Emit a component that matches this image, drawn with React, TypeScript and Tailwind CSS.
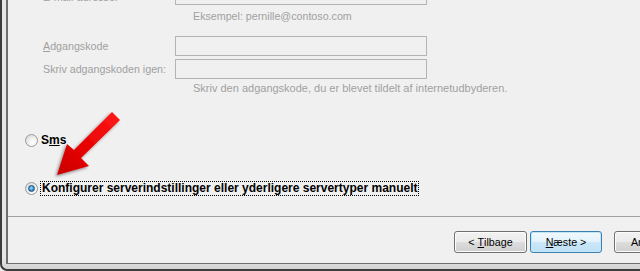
import React from "react";

// ─── Small primitives ─────────────────────────────────────────────────────────

const grayText = "text-[10.7px] text-[#a0a0a0]";

function TextBox() {
  return <div className="w-[252px] h-[20px] border border-[#b4b4b4] bg-[#f0f0f0]" />;
}

function FieldRow({ label, accessKey }: { label: string; accessKey?: boolean }) {
  return (
    <div className="flex items-center h-[20px]">
      <span className={`w-[132px] ${grayText} leading-[20px]`}>
        {accessKey ? (
          <>
            <span className="underline underline-offset-[1px]">{label[0]}</span>
            {label.slice(1)}
          </>
        ) : (
          label
        )}
      </span>
      <TextBox />
    </div>
  );
}

function Radio({ checked }: { checked?: boolean }) {
  return (
    <span className="w-[13px] h-[13px] rounded-full border border-[#9c9c9c] bg-[radial-gradient(circle_at_65%_70%,#ffffff_0%,#f4f4f4_35%,#cfcfcf_100%)] flex items-center justify-center shrink-0">
      {checked && (
        <span className="w-[7px] h-[7px] rounded-full border border-[#1d4f7c] bg-[radial-gradient(circle_at_45%_40%,#9edcfc_0%,#3c93cf_55%,#17538b_100%)]" />
      )}
    </span>
  );
}

function WinButton({
  children,
  primary,
}: {
  children: React.ReactNode;
  primary?: boolean;
}) {
  return (
    <div
      className={
        primary
          ? "w-[72px] h-[22px] shrink-0 rounded-[3px] border border-[#3c7fb1] bg-[linear-gradient(#f1f9fe_0%,#e3f2fb_48%,#cbe7f8_52%,#bfe0f5_100%)] shadow-[inset_0_0_0_1px_#c4e5f6] flex items-center justify-center text-[10.7px] text-black"
          : "w-[73px] h-[22px] shrink-0 rounded-[3px] border border-[#707070] bg-[linear-gradient(#f2f2f2_0%,#ebebeb_48%,#dddddd_52%,#cfcfcf_100%)] shadow-[inset_0_0_0_1px_#fcfcfc] flex items-center justify-center text-[10.7px] text-black"
      }
    >
      {children}
    </div>
  );
}

// ─── Arrow overlay ────────────────────────────────────────────────────────────

function RedArrow() {
  return (
    <svg
      className="absolute left-0 top-0 pointer-events-none"
      width="640"
      height="271"
      viewBox="0 0 640 271"
    >
      <defs>
        <linearGradient id="arrowFill" x1="1" y1="0" x2="0" y2="1">
          <stop offset="0" stopColor="#ff1a1a" />
          <stop offset="0.6" stopColor="#e60000" />
          <stop offset="1" stopColor="#c80000" />
        </linearGradient>
        <filter id="arrowShadow" x="-20%" y="-20%" width="140%" height="140%">
          <feGaussianBlur in="SourceGraphic" stdDeviation="0.5" result="soft" />
          <feDropShadow in="soft" dx="-1.5" dy="1.5" stdDeviation="1.5" floodColor="#000" floodOpacity="0.45" />
        </filter>
      </defs>
      <polygon
        points="112,112 120,120 81,158 89,166 57,175 67,144 74,150"
        fill="url(#arrowFill)"
        filter="url(#arrowShadow)"
      />
    </svg>
  );
}

// ─── Main ─────────────────────────────────────────────────────────────────────

export default function App() {
  return (
    <div className="relative w-[640px] h-[271px] overflow-hidden bg-[#f0f0f0] font-['Liberation_Sans',Arial,sans-serif]">
      {/* outer window frame */}
      <div className="h-[271px] border-l-2 border-b-2 border-[#3c3c3c] rounded-bl-[7px] bg-[linear-gradient(#e6e6e6_0%,#e6e6e6_96%,#d2d2d2_100%)] pl-[4px] pb-[5px]">
        {/* inner dialog panel */}
        <div className="h-[264px] border-l-2 border-b border-[#6e6e6e] bg-[#f0f0f0] flex flex-col">
          {/* form content */}
          <div className="h-[216px] overflow-hidden pl-[35px]">
            {/* E-mail row, cut off at top */}
            <div className="flex items-center h-[20px] mt-[-15px]">
              <span className={`w-[132px] ${grayText} leading-[20px] translate-y-[2px]`}>
                E-mail-adresse:
              </span>
              <TextBox />
            </div>
            <div className={`h-[16px] mt-[3px] pl-[150px] leading-[16px] ${grayText}`}>
              Eksempel: pernille@contoso.com
            </div>

            <div className="mt-[12px]">
              <FieldRow label="Adgangskode" accessKey />
            </div>
            <div className="mt-[3px]">
              <FieldRow label="Skriv adgangskoden igen:" />
            </div>
            <div className={`h-[16px] mt-[1px] pl-[150px] leading-[16px] text-[11px] text-[#a0a0a0]`}>
              Skriv den adgangskode, du er blevet tildelt af internetudbyderen.
            </div>

            {/* radio options */}
            <div className="-ml-[18px] mt-[36px] flex items-center h-[16px] gap-[3px]">
              <Radio />
              <span className="text-[12px] font-bold text-black leading-[16px]">
                S<span className="underline underline-offset-[1px]">m</span>s
              </span>
            </div>
            <div className="-ml-[18px] mt-[32px] flex items-center h-[16px] gap-[2px]">
              <Radio checked />
              <span className="text-[12px] font-bold text-black leading-[13px] border border-dotted border-black px-[1px]">
                Konfigurer serverindstillinger eller yderligere servertyper manuelt
              </span>
            </div>
          </div>

          {/* separator */}
          <div className="h-px bg-[#a0a0a0]" />

          {/* button bar */}
          <div className="flex-1 flex items-start pt-[14px] pl-[446px]">
            <WinButton>
              &lt;&nbsp;<span className="underline">T</span>ilbage
            </WinButton>
            <div className="w-[3px] shrink-0" />
            <WinButton primary>
              <span className="underline">N</span>æste &gt;
            </WinButton>
            <div className="w-[12px] shrink-0" />
            <WinButton>Annuller</WinButton>
          </div>
        </div>
      </div>

      <RedArrow />
    </div>
  );
}
